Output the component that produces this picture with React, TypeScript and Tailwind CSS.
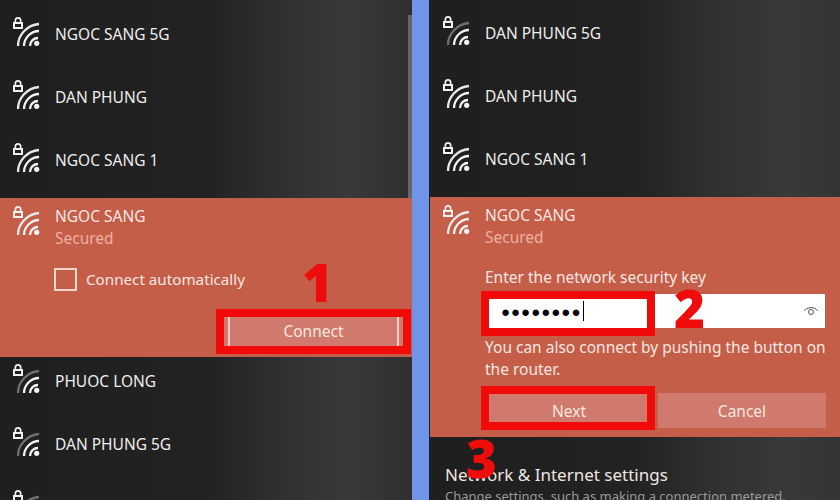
const font = { fontFamily: '"Noto Sans", "Open Sans", sans-serif' };

function WifiIcon({ dim = false }: { dim?: boolean }) {
  return (
    <svg width="30" height="32" viewBox="0 0 30 32" fill="none" className="shrink-0">
      <path
        fillRule="evenodd"
        fill="#f2f2f2"
        d="M1.500 4.500a3.500 3.500 0 0 1 7 0V6H10v7H0V6h1.500zM3.200 6h3.600V4.500a1.800 1.800 0 0 0-3.600 0zM2 8v3h6V8z"
      />
      <path d="M5 30C5 19 14 9 26 8" stroke={dim ? '#6f6f6f' : '#e8e8e8'} strokeWidth="2.300" />
      <path d="M11 30C11 22 18 15 26 15" stroke="#f2f2f2" strokeWidth="2.300" />
      <path d="M17 30C17 25 21 22 25 22" stroke="#f2f2f2" strokeWidth="2.300" />
      <circle cx="23.700" cy="27.300" r="2.600" fill="#f5f5f5" />
    </svg>
  );
}

function NetworkRow({ name, dim, className = 'pt-[7px]' }: { name: string; dim?: boolean; className?: string }) {
  return (
    <div className={`flex h-[63px] gap-3 pl-[13px] ${className}`}>
      <WifiIcon dim={dim} />
      <span className="mt-[7px] text-[15.500px] leading-[22px] text-[#ededed]">{name}</span>
    </div>
  );
}

function SelectedHead() {
  return (
    <div className="flex gap-3 pl-[13px] pt-[7px]">
      <WifiIcon />
      <div className="text-[15.500px] leading-[22px]">
        <div className="text-[#f7e6e0]">NGOC SANG</div>
        <div className="text-[#eeb0a0]">Secured</div>
      </div>
    </div>
  );
}

function RedBox({ className }: { className: string }) {
  return <div className={`absolute border-[#f00a0a] ${className}`} />;
}

function RedNumber({ value, className }: { value: string; className: string }) {
  return (
    <span
      className={`absolute text-[53px] leading-none font-extrabold text-[#ee0c0c] ${className}`}
      style={{ fontFamily: '"Open Sans", sans-serif' }}
    >
      {value}
    </span>
  );
}

function LeftPanel() {
  return (
    <div className="relative h-full w-[412px] bg-[linear-gradient(90deg,#1f1f1f_0%,#222222_50%,#303030_68%,#393939_85%,#2f2f2f_100%)] pt-[9px]">
      <div className="absolute top-[15px] right-0 h-[183px] w-1 bg-[#666666]" />
      <NetworkRow name="NGOC SANG 5G" />
      <NetworkRow name="DAN PHUNG" />
      <NetworkRow name="NGOC SANG 1" />
      <div className="h-[159px] bg-[#c45e49]">
        <SelectedHead />
        <div className="mt-[19px] flex items-center gap-[9px] pl-[54px] text-[15.200px] text-[#f7e6e0]">
          <div className="h-[23px] w-[23px] border-2 border-[#f3d6ce]" />
          <span>Connect automatically</span>
        </div>
        <div className="mt-[26px] ml-[224px] flex h-[29px] w-[179px] bg-[#cf7a6c] px-1">
          <div className="flex flex-1 items-center justify-center border-x-2 border-[#eeccc4] text-[15.500px] text-[#f7e6e0]">
            Connect
          </div>
        </div>
      </div>
      <NetworkRow name="PHUOC LONG" dim className="pt-[6px]" />
      <NetworkRow name="DAN PHUNG 5G" dim className="pt-[6px]" />
      <NetworkRow name="" dim className="pt-[6px]" />
      <RedBox className="top-[309px] left-[216px] h-[45px] w-[195px] border-[8px]" />
      <RedNumber value="1" className="top-[255px] left-[302px]" />
    </div>
  );
}

function RightPanel() {
  return (
    <div className="relative h-full flex-1 overflow-hidden border-l border-[#15202e] bg-[linear-gradient(90deg,#1f1f1f_0%,#222222_50%,#303030_68%,#393939_88%,#343434_100%)] pt-[8px]">
      <NetworkRow name="DAN PHUNG 5G" dim />
      <NetworkRow name="DAN PHUNG" />
      <NetworkRow name="NGOC SANG 1" />
      <div className="h-[240px] bg-[#c45e49]">
        <SelectedHead />
        <div className="pr-[14px] pl-[55px] text-[15.500px] leading-[22px] text-[#f7e6e0]">
          <div className="mt-[18px]">Enter the network security key</div>
          <div className="mt-[6px] mr-px flex h-[34px] items-center justify-between bg-white pr-[6px] pl-4">
            <div className="flex items-center">
              <span className="text-[15px] tracking-[1px] text-black">●●●●●●●●</span>
              <span className="ml-[2px] h-[20px] w-px bg-black" />
            </div>
            <svg width="16" height="12" viewBox="0 0 16 12" fill="none" stroke="#555">
              <path d="M1 6c3-4.500 11-4.500 14 0" />
              <circle cx="8" cy="7" r="2.500" />
            </svg>
          </div>
          <p className="mt-[8px] whitespace-nowrap">
            You can also connect by pushing the button on
            <br />
            the router.
          </p>
          <div className="mt-[13px] flex h-[35px] gap-[5px]">
            <div className="flex w-[168px] items-center justify-center bg-[#cf7a6c]">Next</div>
            <div className="flex w-[168px] items-center justify-center bg-[#cf7a6c]">Cancel</div>
          </div>
        </div>
      </div>
      <div className="pt-[26px] pl-[15px]">
        <div className="text-[17px] leading-[24px] text-[#f0e6e2]">Network &amp; Internet settings</div>
        <div className="text-[13px] leading-[18px] whitespace-nowrap text-[#9a9a9a]">
          Change settings, such as making a connection metered.
        </div>
      </div>
      <RedBox className="top-[291px] left-[51px] h-[45px] w-[174px] border-[8px]" />
      <RedBox className="top-[386px] left-[51px] h-[44px] w-[174px] border-[8px]" />
      <RedNumber value="2" className="top-[281px] left-[244px]" />
      <RedNumber value="3" className="top-[431px] left-[36px]" />
    </div>
  );
}

export default function App() {
  return (
    <div className="flex h-[500px] w-[840px] overflow-hidden bg-[#6f94ea]" style={font}>
      <LeftPanel />
      <div className="w-[17px]" />
      <RightPanel />
    </div>
  );
}
